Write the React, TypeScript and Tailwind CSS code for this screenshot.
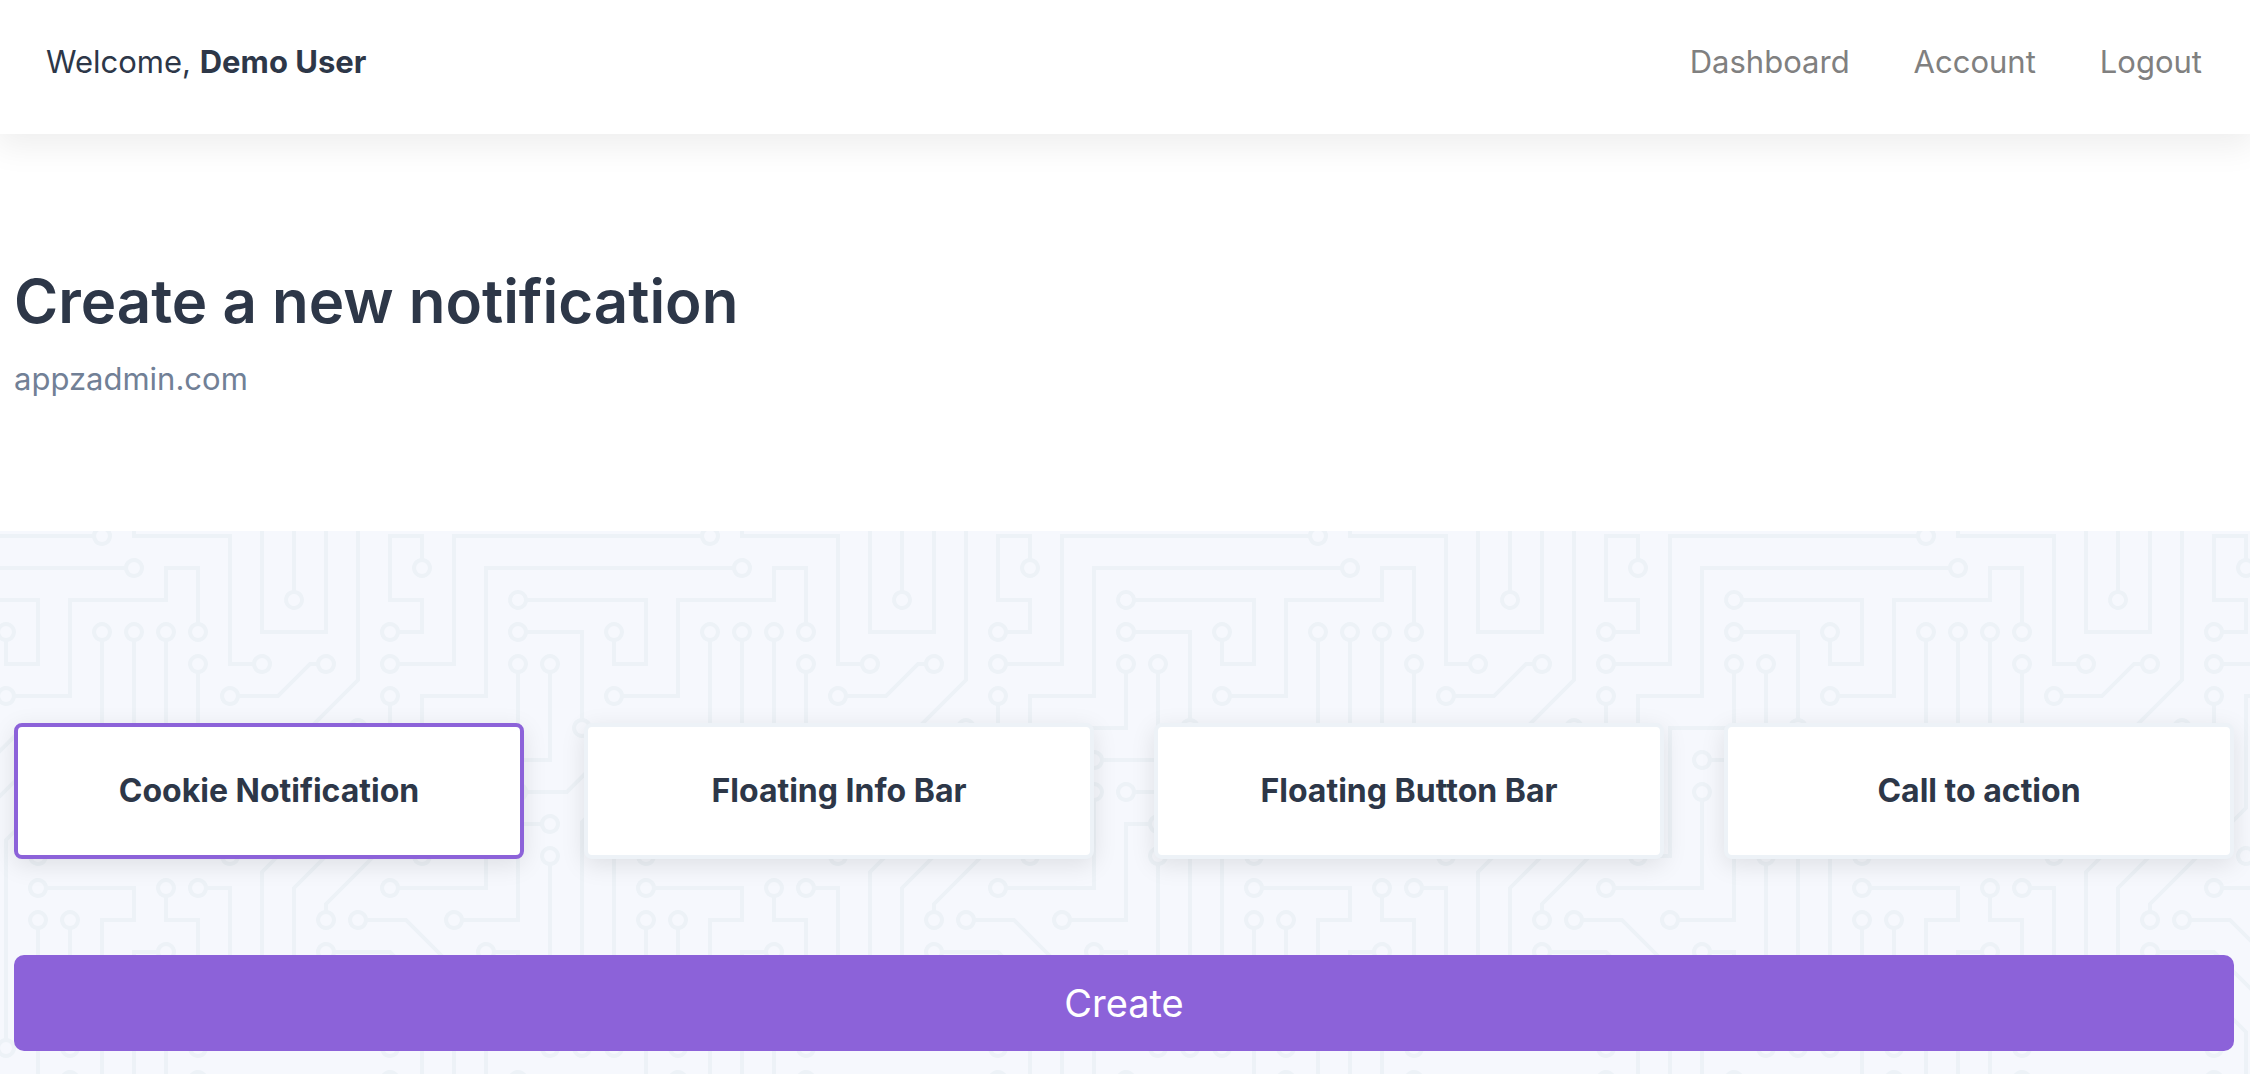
import React from "react";
import { useState } from "react";

const navLinks = ["Dashboard", "Account", "Logout"];

const notificationTypes = [
  "Cookie Notification",
  "Floating Info Bar",
  "Floating Button Bar",
  "Call to action",
];

// centers of the solder points inside one 304x304 tile
const points = [
  [49, 225], [209, 273], [257, 225], [257, 241], [273, 129], [177, 129],
  [17, 81], [193, 113], [289, 113], [257, 17], [193, 225], [193, 161],
  [241, 17], [257, 33], [129, 129], [145, 225], [129, 113], [81, 161],
  [113, 241], [177, 161], [97, 177], [129, 225], [65, 289], [241, 177],
  [257, 145], [273, 193], [193, 241], [177, 145], [289, 33], [97, 97],
  [49, 145], [49, 33], [113, 33], [65, 129], [97, 81], [129, 33],
  [113, 17], [145, 65], [225, 289], [241, 145], [49, 17], [161, 49],
  [161, 17], [113, 97], [209, 17], [145, 193], [225, 17], [161, 225],
  [17, 161], [49, 49], [33, 209], [33, 65], [17, 33], [273, 49],
  [257, 209], [49, 241], [17, 193], [209, 257], [33, 161], [49, 257],
  [17, 177],
];

const tracks =
  "M44.1 224a5 5 0 1 1 0 2H0v-2h44.1zm160 48a5 5 0 1 1 0 2H82v-2h122.1zm57.8-46a5 5 0 1 1 0-2H304v2h-42.1zm0 16a5 5 0 1 1 0-2H304v2h-42.1zm6.2-114a5 5 0 1 1 0 2h-86.2a5 5 0 1 1 0-2h86.2zm-256-48a5 5 0 1 1 0 2H0v-2h12.1zm185.8 34a5 5 0 1 1 0-2h86.2a5 5 0 1 1 0 2h-86.2zM258 12.1a5 5 0 1 1-2 0V0h2v12.1zm-64 208a5 5 0 1 1-2 0v-54.2a5 5 0 1 1 2 0v54.2zm48-198.2V80h62v2h-64V21.9a5 5 0 1 1 2 0zm16 16V64h46v2h-48V37.9a5 5 0 1 1 2 0zm-128 96V208h16v12.1a5 5 0 1 1-2 0V210h-16v-76.1a5 5 0 1 1 2 0zm-5.9-21.9a5 5 0 1 1 0 2H114v48H85.9a5 5 0 1 1 0-2H112v-48h12.1zm-6.2 130a5 5 0 1 1 0-2H176v-74.1a5 5 0 1 1 2 0V242h-60.1zm-16-64a5 5 0 1 1 0-2H114v48h10.1a5 5 0 1 1 0 2H112v-48h-10.1zM66 284.1a5 5 0 1 1-2 0V274H50v30h-2v-32h18v12.1zM236.1 176a5 5 0 1 1 0 2H226v94h48v32h-2v-30h-48v-98h12.1zm25.8-30a5 5 0 1 1 0-2H274v44.1a5 5 0 1 1-2 0V146h-10.1zm-64 96a5 5 0 1 1 0-2H208v-80h16v-14h-42.1a5 5 0 1 1 0-2H226v18h-16v80h-12.1zm86.2-210a5 5 0 1 1 0 2H272V0h2v32h10.1zM98 101.9V146H53.9a5 5 0 1 1 0-2H96v-42.1a5 5 0 1 1 2 0zM53.9 34a5 5 0 1 1 0-2H80V0h2v34H53.9zm60.1 3.9V66H82v64H69.9a5 5 0 1 1 0-2H80V64h32V37.9a5 5 0 1 1 2 0zM101.9 82a5 5 0 1 1 0-2H128V37.9a5 5 0 1 1 2 0V82h-28.1zm16-64a5 5 0 1 1 0-2H146v44.1a5 5 0 1 1-2 0V18h-26.1zm102.2 270a5 5 0 1 1 0 2H98v14h-2v-16h124.1zM242 149.9V160h16v34h-16v62h48v48h-2v-46h-48v-66h16v-30h-16v-12.1a5 5 0 1 1 2 0zM53.9 18a5 5 0 1 1 0-2H64V2H48V0h18v18H53.9zm112 32a5 5 0 1 1 0-2H192V0h50v2h-48v48h-28.1zm-48-48a5 5 0 0 1-9.8-2h2.07a3 3 0 1 0 5.66 0H178v34h-18V21.9a5 5 0 1 1 2 0V32h14V2h-58.1zm0 96a5 5 0 1 1 0-2H137l32-32h39V21.9a5 5 0 1 1 2 0V66h-40.17l-32 32H117.9zm28.1 90.1a5 5 0 1 1-2 0v-76.51L175.59 80H224V21.9a5 5 0 1 1 2 0V82h-49.59L146 112.41v75.69zm16 32a5 5 0 1 1-2 0v-99.51L184.59 96H300.1a5 5 0 0 1 3.9-3.9v2.07a3 3 0 0 0 0 5.66v2.07a5 5 0 0 1-3.9-3.9H185.41L162 121.41v98.69zm-144-64a5 5 0 1 1-2 0v-3.51l48-48V48h32V0h2v50H66v55.41l-48 48v2.69zM50 53.9v43.51l-48 48V208h26.1a5 5 0 1 1 0 2H0v-65.41l48-48V53.9a5 5 0 1 1 2 0zm-16 16V89.41l-34 34v-2.82l32-32V69.9a5 5 0 1 1 2 0zM12.1 32a5 5 0 1 1 0 2H9.41L0 43.41V40.6L8.59 32h3.51zm265.8 18a5 5 0 1 1 0-2h18.69l7.41-7.41v2.82L297.41 50H277.9zm-16 160a5 5 0 1 1 0-2H288v-71.41l16-16v2.82l-14 14V210h-28.1zm-208 32a5 5 0 1 1 0-2H64v-22.59L40.59 194H21.9a5 5 0 1 1 0-2H41.41L66 216.59V242H53.9zm150.2 14a5 5 0 1 1 0 2H96v-56.6L56.6 162H37.9a5 5 0 1 1 0-2h19.5L98 200.6V256h106.1zm-150.2 2a5 5 0 1 1 0-2H80v-46.59L48.59 178H21.9a5 5 0 1 1 0-2H49.41L82 208.59V258H53.9zM34 39.8v1.61L9.41 66H0v-2h8.59L32 40.59V0h2v39.8zM2 300.1a5 5 0 0 1 3.9 3.9H3.83A3 3 0 0 0 0 302.17V256h18v48h-2v-46H2v42.1zM34 241v63h-2v-62H0v-2h34v1zM17 18H0v-2h16V0h2v18h-1zm273-2h14v2h-16V0h2v16zm-32 273v15h-2v-14h-14v14h-2v-16h18v1zM0 92.1A5.02 5.02 0 0 1 6 97a5 5 0 0 1-6 4.9v-2.07a3 3 0 1 0 0-5.66V92.1zM80 272h2v32h-2v-32zm37.9 32h-2.07a3 3 0 0 0-5.66 0h-2.07a5 5 0 0 1 9.8 0zM5.9 0A5.02 5.02 0 0 1 0 5.9V3.83A3 3 0 0 0 3.83 0H5.9zm294.2 0h2.07A3 3 0 0 0 304 3.83V5.9a5 5 0 0 1-3.9-5.9zm3.9 300.1v2.07a3 3 0 0 0-1.83 1.83h-2.07a5 5 0 0 1 3.9-3.9z";

const CircuitBackground = () => (
  <svg className="absolute inset-0 h-full w-full" aria-hidden="true">
    <defs>
      <pattern
        id="circuit"
        width="304"
        height="304"
        patternUnits="userSpaceOnUse"
        patternTransform="translate(292 67) scale(2)"
      >
        <path d={tracks} className="fill-[#edf2f7]" />
        {points.map(([x, y]) => (
          <circle key={`${x}-${y}`} cx={x} cy={y} r="3" className="fill-[#f6f8fd]" />
        ))}
      </pattern>
    </defs>
    <rect width="100%" height="100%" fill="url(#circuit)" />
  </svg>
);

const Header = () => (
  <header className="relative flex items-center justify-between bg-white pt-[38px] pr-12 pb-12 pl-[46px] text-[31px] leading-[48px] shadow-[0_8px_32px_4px_rgba(0,0,0,0.07)]">
    <p>
      Welcome, <span className="font-bold">Demo User</span>
    </p>
    <nav className="flex gap-16 text-[#808080]">
      {navLinks.map((name) => (
        <a key={name} href="#">
          {name}
        </a>
      ))}
    </nav>
  </header>
);

const App = () => {
  const [selected, setSelected] = useState(notificationTypes[0]);

  return (
    <div className="flex min-h-screen flex-col bg-white font-['Inter','Liberation_Sans',sans-serif] text-[#2d3748]">
      <Header />
      <div className="pt-[127px] pr-4 pb-32 pl-3.5">
        <h1 className="text-[60px] leading-[80px] font-semibold">
          Create a new notification
        </h1>
        <p className="mt-3.5 text-[31px] leading-[48px] text-[#718096]">
          appzadmin.com
        </p>
      </div>
      <main className="relative flex-1 bg-[#f6f8fd]">
        <CircuitBackground />
        <form
          className="relative pt-48 pr-4 pb-5 pl-3.5"
          onSubmit={(e) => e.preventDefault()}
        >
          <div className="grid grid-cols-4 gap-[60px]">
            {notificationTypes.map((type) => (
              <label
                key={type}
                className={`${selected === type ? "border-[#8c62d9]" : "border-[#edf2f7]"} relative cursor-pointer rounded-lg border-4 bg-white py-10 text-center text-[32px] leading-[48px] font-bold shadow-[0_6px_24px_rgba(0,0,0,0.1)]`}
              >
                <input
                  type="radio"
                  name="type"
                  className="sr-only"
                  checked={selected === type}
                  onChange={() => setSelected(type)}
                />
                {type}
              </label>
            ))}
          </div>
          <button
            type="submit"
            className="mt-24 block h-24 w-full cursor-pointer rounded-[10px] bg-[#8c62d9] text-[38px] leading-[60px] text-white"
          >
            Create
          </button>
        </form>
      </main>
    </div>
  );
};

export default App;
